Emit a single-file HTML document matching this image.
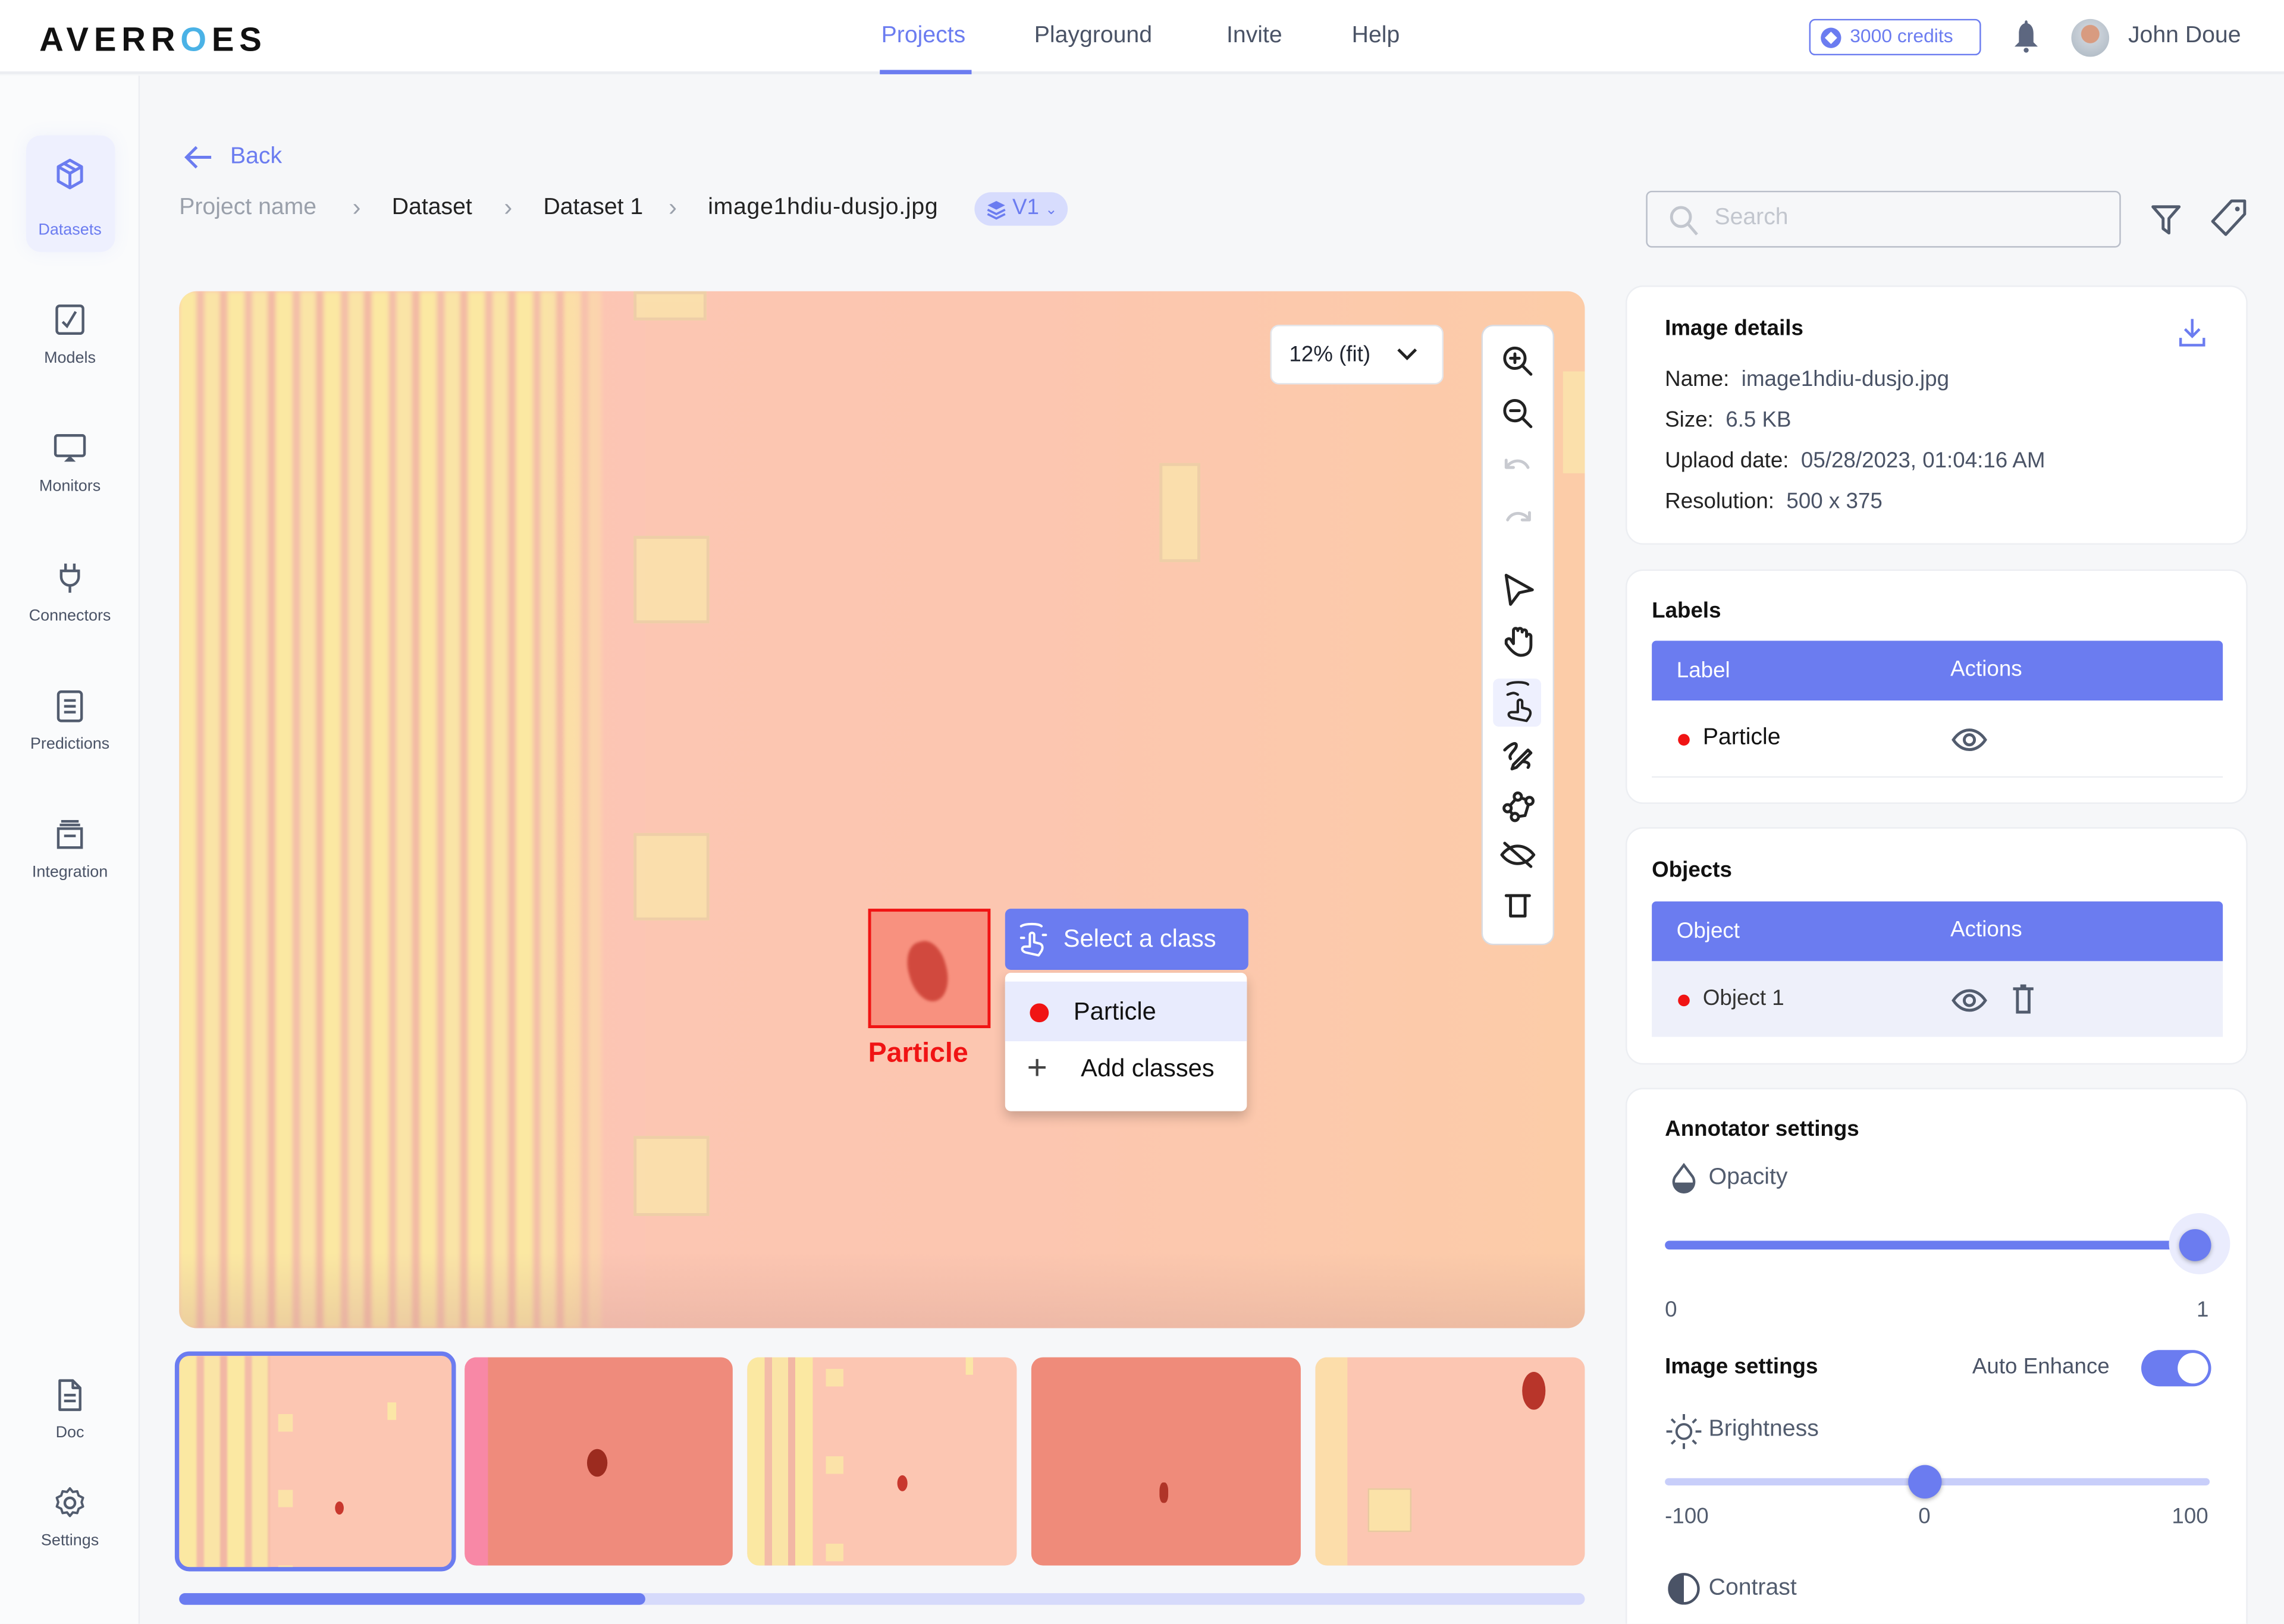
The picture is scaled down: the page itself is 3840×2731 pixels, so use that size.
<!DOCTYPE html>
<html><head><meta charset="utf-8"><style>
*{box-sizing:border-box;margin:0;padding:0}
html,body{width:3840px;height:2730px;overflow:hidden;background:#f6f7f9}
#r{position:absolute;left:0;top:0;width:1568px;height:1115px;transform:scale(2.44898);transform-origin:0 0;font-family:"Liberation Sans",sans-serif;color:#1f2430;background:#f6f7f9;overflow:hidden}
.a{position:absolute}
.nav{font-size:16px;color:#4a5366;top:16px}
.sb{position:absolute;left:0;width:96px;text-align:center;font-size:11px;color:#4a5366}
.sb svg{display:block;margin:0 auto 8px}
.card{position:absolute;left:1116px;width:427px;background:#fff;border-radius:12px;border:1px solid #eceef2}
.hd{position:absolute;left:17px;width:392px;height:41px;background:#6b7cf0;color:#fff;font-size:15px;border-radius:3px 3px 0 0}
.t{stroke:#222;fill:none;stroke-width:2;stroke-linecap:round;stroke-linejoin:round}
.thumb{position:absolute;top:932px;height:143px;border-radius:8px;overflow:hidden}
.stripes{background:repeating-linear-gradient(90deg,#fbe8a2 0 12px,#f3bca8 12px 17px,#fae4a6 17px 28px,#f2b7a4 28px 33px)}
.bc{position:absolute;top:134px;font-size:16px;color:#222;white-space:nowrap}
.ch{position:absolute;top:133px;font-size:17px;color:#9aa0ab}
.win{position:absolute;background:#fae3ac;border:2px solid #ecd0a6;opacity:.85}
</style></head><body><div id="r">
<!-- header -->
<div class="a" style="left:0;top:0;width:1568px;height:51px;background:#fff;border-bottom:2px solid #eceef2"></div>
<div class="a" style="left:27px;top:14px;font-size:23px;font-weight:bold;letter-spacing:3.6px;color:#111">AVERR<span style="color:#4ab2e6">O</span>ES</div>
<div class="a nav" style="left:605px;color:#6b7cf0">Projects</div>
<div class="a" style="left:604px;top:48px;width:63px;height:3px;background:#6b7cf0"></div>
<div class="a nav" style="left:710px">Playground</div>
<div class="a nav" style="left:842px">Invite</div>
<div class="a nav" style="left:928px">Help</div>
<div class="a" style="left:1242px;top:13px;width:118px;height:25px;border:1.5px solid #6b7cf0;border-radius:4px;color:#6b7cf0;font-size:13px;padding:3px 0 0 27px">3000 credits</div>
<div class="a" style="left:1250px;top:19px;width:14px;height:14px;border-radius:50%;background:#6b7cf0"></div>
<div class="a" style="left:1254px;top:23px;width:6px;height:6px;background:#fff;transform:rotate(45deg)"></div>
<svg class="a" style="left:1381px;top:13px" width="20" height="24" viewBox="0 0 20 24"><path d="M10 1c1 0 1 1.5 1 2 3 1 4 4 4 7v6l3 3H2l3-3v-6c0-3 1-6 4-7 0-.5 0-2 1-2z" fill="#5d6780"/><circle cx="10" cy="21.5" r="1.7" fill="#5d6780"/></svg>
<div class="a" style="left:1422px;top:13px;width:26px;height:26px;border-radius:50%;background:radial-gradient(circle at 50% 40%,#d89b80 0 30%,#c9d0d8 32%,#a9b5c0)"></div>
<div class="a" style="left:1461px;top:16px;font-size:16px;color:#4a5366">John Doue</div>
<!-- sidebar -->
<div class="a" style="left:0;top:52px;width:96px;height:1063px;background:#fafbfc;border-right:1px solid #eceef2"></div>
<div class="a" style="left:18px;top:93px;width:61px;height:80px;border-radius:10px;background:#eef0fe;box-shadow:0 0 12px rgba(107,124,240,.08)"></div>
<div class="sb" style="top:108px;color:#6b7cf0"><svg width="22" height="24" viewBox="0 0 22 24" style="margin-bottom:20px"><path d="M11 2l8 4.5v10L11 21l-8-4.5v-10zM3 6.5l8 4.5 8-4.5M11 11v10M7 4.3l8 4.5" stroke="#6b7cf0" stroke-width="2" fill="none" stroke-linejoin="round"/></svg>Datasets</div>
<div class="sb" style="top:208px"><svg width="22" height="24" viewBox="0 0 22 24"><rect x="2" y="2" width="18" height="19" rx="2" stroke="#525c6e" stroke-width="1.8" fill="none"/><path d="M6 13l3 3 6-10" stroke="#525c6e" stroke-width="1.8" fill="none"/></svg>Models</div>
<div class="sb" style="top:296px"><svg width="24" height="24" viewBox="0 0 24 24"><rect x="2" y="3" width="20" height="14" rx="1.5" stroke="#525c6e" stroke-width="1.8" fill="none"/><path d="M8 21l4-4 4 4z" fill="#525c6e"/></svg>Monitors</div>
<div class="sb" style="top:385px"><svg width="22" height="24" viewBox="0 0 22 24"><path d="M8 2v5M14 2v5M5 7h12v4a6 6 0 01-12 0zM11 17v5" stroke="#525c6e" stroke-width="1.8" fill="none"/></svg>Connectors</div>
<div class="sb" style="top:473px"><svg width="22" height="24" viewBox="0 0 22 24"><rect x="3" y="2" width="16" height="20" rx="2" stroke="#525c6e" stroke-width="1.8" fill="none"/><path d="M7 8h8M7 12h8M7 16h8" stroke="#525c6e" stroke-width="1.8"/></svg>Predictions</div>
<div class="sb" style="top:561px"><svg width="22" height="24" viewBox="0 0 22 24"><path d="M5 3h12M3 8h16v13H3zM7 13h8M4 5.5h14" stroke="#525c6e" stroke-width="1.8" fill="none"/></svg>Integration</div>
<div class="sb" style="top:946px"><svg width="22" height="24" viewBox="0 0 22 24"><path d="M4 2h9l5 5v15H4zM13 2v5h5M7 12h8M7 16h8" stroke="#525c6e" stroke-width="1.8" fill="none" stroke-linejoin="round"/></svg>Doc</div>
<div class="sb" style="top:1020px"><svg width="22" height="24" viewBox="0 0 22 24"><circle cx="11" cy="12" r="3.5" stroke="#525c6e" stroke-width="1.8" fill="none"/><path d="M11 2l2 2.5 3-.5 1 3 3 1.5-1 3 1 3-3 1.5-1 3-3-.5-2 2.5-2-2.5-3 .5-1-3-3-1.5 1-3-1-3 3-1.5 1-3 3 .5z" stroke="#525c6e" stroke-width="1.6" fill="none" stroke-linejoin="round"/></svg>Settings</div>
<!-- breadcrumb -->
<svg class="a" style="left:125px;top:98px" width="22" height="20" viewBox="0 0 22 20"><path d="M20 10H3M10 3L3 10l7 7" stroke="#6b7cf0" stroke-width="2" fill="none"/></svg>
<div class="a" style="left:158px;top:99px;font-size:16px;color:#6b7cf0">Back</div>
<div class="bc" style="left:123px;color:#9aa0ab">Project name</div>
<div class="ch" style="left:242px">›</div>
<div class="bc" style="left:269px">Dataset</div>
<div class="ch" style="left:346px">›</div>
<div class="bc" style="left:373px">Dataset 1</div>
<div class="ch" style="left:459px">›</div>
<div class="bc" style="left:486px;letter-spacing:.3px">image1hdiu-dusjo.jpg</div>
<div class="a" style="left:669px;top:132px;width:64px;height:23px;border-radius:12px;background:#d7dcfd;color:#6b7cf0;font-size:15px;padding:2px 0 0 26px">V1 <span style="font-size:10px">⌄</span></div>
<svg class="a" style="left:677px;top:137px" width="14" height="14" viewBox="0 0 14 14"><path d="M7 1l6 3-6 3-6-3z" fill="#6b7cf0"/><path d="M1 7l6 3 6-3M1 10l6 3 6-3" stroke="#6b7cf0" stroke-width="1.5" fill="none"/></svg>
<!-- search -->
<div class="a" style="left:1130px;top:131px;width:326px;height:39px;border:1.5px solid #b9bec9;border-radius:4px;background:#f6f7f9"></div>
<svg class="a" style="left:1145px;top:140px" width="22" height="22" viewBox="0 0 22 22"><circle cx="9" cy="9" r="6.5" stroke="#c2c6ce" stroke-width="2" fill="none"/><path d="M14 14l6 7" stroke="#c2c6ce" stroke-width="2"/></svg>
<div class="a" style="left:1177px;top:141px;font-size:16px;color:#c2c6ce">Search</div>
<svg class="a" style="left:1476px;top:140px" width="22" height="22" viewBox="0 0 22 22"><path d="M2 2h18l-7 8v10l-4-3v-7z" stroke="#525c6e" stroke-width="2" fill="none" stroke-linejoin="round"/></svg>
<svg class="a" style="left:1516px;top:136px" width="28" height="28" viewBox="0 0 28 28"><path d="M16 2h9v9L12 25 3 16z" stroke="#525c6e" stroke-width="2" fill="none" stroke-linejoin="round"/><circle cx="20" cy="7.5" r="1.6" fill="#525c6e"/></svg>
<!-- canvas -->
<div class="a" style="left:123px;top:200px;width:965px;height:712px;border-radius:12px;overflow:hidden;background:linear-gradient(90deg,#fcc5b4 0%,#fcc6b0 60%,#fccca8 100%)">
 <div class="a stripes" style="left:0;top:0;width:290px;height:712px;filter:blur(1.5px)"></div>
 <div class="a" style="left:250px;top:0;width:70px;height:712px;background:linear-gradient(90deg,rgba(252,197,180,0),#fcc5b4)"></div>
 <div class="win" style="left:312px;top:0;width:50px;height:20px"></div>
 <div class="win" style="left:312px;top:168px;width:52px;height:60px"></div>
 <div class="win" style="left:312px;top:372px;width:52px;height:60px"></div>
 <div class="win" style="left:312px;top:580px;width:52px;height:55px"></div>
 <div class="win" style="left:673px;top:118px;width:28px;height:68px"></div>
 <div class="win" style="left:950px;top:55px;width:15px;height:70px;border:none"></div>
 <div class="a" style="left:0;top:660px;width:965px;height:52px;background:linear-gradient(180deg,rgba(200,150,140,0),rgba(210,160,150,.35))"></div>
</div>
<!-- zoom select -->
<div class="a" style="left:872px;top:223px;width:119px;height:41px;background:#fff;border-radius:6px;border:1px solid #e3e5ea;font-size:15px;padding:11px 0 0 12px">12% (fit)</div>
<svg class="a" style="left:958px;top:237px" width="16" height="12" viewBox="0 0 16 12"><path d="M2 3l6 6 6-6" stroke="#222" stroke-width="2" fill="none"/></svg>
<!-- toolbar -->
<div class="a" style="left:1017px;top:223px;width:50px;height:426px;background:#fff;border-radius:8px;border:1.5px solid #d9dce3"></div>
<div class="a" style="left:1025px;top:466px;width:33px;height:33px;background:#eef0fe;border-radius:4px"></div>
<svg class="a" style="left:1029px;top:235px" width="26" height="410" viewBox="0 0 26 410">
 <g class="t"><circle cx="11" cy="11" r="7"/><path d="M16 16l6 6M8 11h6M11 8v6"/></g>
 <g class="t" transform="translate(0,36)"><circle cx="11" cy="11" r="7"/><path d="M16 16l6 6M8 11h6"/></g>
 <g class="t" style="stroke:#c8cad0" transform="translate(0,72)"><path d="M5 14c4-6 12-6 15 0M5 14l0-5M5 14l5 0"/></g>
 <g class="t" style="stroke:#c8cad0" transform="translate(0,108)"><path d="M21 14c-4-6-12-6-15 0M21 14l0-5M21 14l-5 0"/></g>
 <path class="t" d="M5 160l18 10-9 2-6 8z"/>
 <path class="t" d="M5 207c2 3 6 8 10 8 5 0 7-3 7-7v-6c0-2-3-2-3 0v-3c0-2-3-2-3 0v-1c0-2-3-2-3 0v0c0-2-3-2-3 0v9l-2-3c-1-1-3 0-3 1z"/>
 <path class="t" style="stroke-width:1.7" d="M6 235c3-2 12-2 14 0M6 242c3-1 4-2 7 0M9 258c-3-1-3-4 0-4l4 0v-7c0-2 3-2 3 0v4l4 1c2 1 2 3 1 5l-2 3z"/>
 <path class="t" d="M4 280c4-4 8-6 8-3s-6 6-4 9M10 290l10-10 2 2-10 10-3 1zM16 288c3 0 6 1 4 4"/>
 <g class="t"><path d="M6 320l7-8 8 3-3 10-7 1z"/><circle cx="6" cy="320" r="2.5" fill="#fff"/><circle cx="13" cy="312" r="2.5" fill="#fff"/><circle cx="21" cy="315" r="2.5" fill="#fff"/><circle cx="11" cy="326" r="2.5" fill="#fff"/></g>
 <g class="t"><path d="M2 352c6-8 16-8 22 0-6 8-16 8-22 0zM4 344l18 16"/></g>
 <g class="t"><path d="M5 380h16M8 380v14h10v-14"/></g>
</svg>
<!-- bbox + menu -->
<div class="a" style="left:596px;top:624px;width:84px;height:82px;border:2px solid #f01414;background:#f8917f"></div>
<div class="a" style="left:624px;top:646px;width:26px;height:42px;border-radius:45% 45% 50% 50%;background:#c8382e;transform:rotate(-15deg);opacity:.8;filter:blur(1px)"></div>
<div class="a" style="left:596px;top:713px;font-size:19px;color:#f01414;font-weight:bold">Particle</div>
<div class="a" style="left:690px;top:624px;width:167px;height:42px;background:#6b7cf0;border-radius:4px;color:#fff;font-size:17px;padding:11px 0 0 40px">Select a class</div>
<svg class="a" style="left:698px;top:633px" width="22" height="24" viewBox="0 0 22 24"><path class="t" style="stroke:#fff;stroke-width:1.6" d="M3 3c3-2 12-2 14 0M6 21c-3-1-3-4 0-4l3 0v-8c0-2 3-2 3 0v5l4 1c2 1 2 3 1 5l-2 3zM3 11l2 0M18 9l2 0"/></svg>
<div class="a" style="left:690px;top:668px;width:166px;height:95px;background:#fff;border-radius:4px;box-shadow:0 4px 8px rgba(0,0,0,.2)"></div>
<div class="a" style="left:690px;top:674px;width:166px;height:41px;background:#e8ebfd"></div>
<div class="a" style="left:707px;top:689px;width:13px;height:13px;border-radius:50%;background:#f01414"></div>
<div class="a" style="left:737px;top:685px;font-size:17px;color:#111">Particle</div>
<div class="a" style="left:705px;top:720px;font-size:24px;color:#444;font-weight:300">+</div>
<div class="a" style="left:742px;top:724px;font-size:17px;color:#111">Add classes</div>
<!-- thumbnails -->
<div class="thumb" style="left:120px;top:928px;width:193px;height:151px;border:3px solid #6b7cf0;border-radius:10px;background:#fcc6b2"><div class="a stripes" style="left:0;top:0;width:62px;height:151px;filter:blur(.6px)"></div><div class="a" style="left:68px;top:0;width:10px;height:150px;background:repeating-linear-gradient(180deg,#fcc6b2 0 40px,#fbe2a8 40px 52px)"></div><div class="a" style="left:143px;top:32px;width:6px;height:12px;background:#fbe6a6"></div><div class="a" style="left:107px;top:100px;width:6px;height:9px;background:#c8382e;border-radius:50%"></div></div>
<div class="thumb" style="left:319px;width:184px;background:#ef8b7c"><div class="a" style="left:0;top:0;width:16px;height:143px;background:#f888a6"></div><div class="a" style="left:84px;top:63px;width:14px;height:19px;background:#9c2b1f;border-radius:50%"></div></div>
<div class="thumb" style="left:513px;width:185px;background:#fcc6b2"><div class="a stripes" style="left:0;top:0;width:45px;height:143px"></div><div class="a" style="left:54px;top:0;width:12px;height:143px;background:repeating-linear-gradient(180deg,#fcc6b2 0 8px,#fbe2a8 8px 20px,#fcc6b2 20px 60px)"></div><div class="a" style="left:150px;top:0;width:5px;height:12px;background:#fbe6a6"></div><div class="a" style="left:103px;top:81px;width:7px;height:11px;background:#c8382e;border-radius:50%"></div></div>
<div class="thumb" style="left:708px;width:185px;background:#ef8b7a"><div class="a" style="left:88px;top:86px;width:6px;height:14px;background:#b03528;border-radius:40%"></div></div>
<div class="thumb" style="left:903px;width:185px;background:#fcc6b2"><div class="a" style="left:0;top:0;width:22px;height:143px;background:#fbe2a8;opacity:.8"></div><div class="a" style="left:36px;top:90px;width:30px;height:30px;background:#fbe2a8;border:1.5px solid #e8c9a0"></div><div class="a" style="left:142px;top:10px;width:16px;height:26px;background:#b8352a;border-radius:50%"></div></div>
<div class="a" style="left:123px;top:1094px;width:965px;height:8px;border-radius:4px;background:#d6dafb"></div>
<div class="a" style="left:123px;top:1094px;width:320px;height:8px;border-radius:4px;background:#6b7cf0"></div>
<!-- right cards -->
<div class="card" style="top:196px;height:178px">
 <div class="a" style="left:26px;top:20px;font-size:15px;font-weight:bold;color:#111">Image details</div>
 <svg class="a" style="left:378px;top:20px" width="20" height="22" viewBox="0 0 20 22"><path d="M10 2v12M5 9l5 5 5-5M2 15v5h16v-5" stroke="#6b7cf0" stroke-width="1.8" fill="none"/></svg>
 <div class="a" style="left:26px;top:50px;font-size:15px;line-height:28px;color:#222">Name:&nbsp; <span style="color:#4a5366">image1hdiu-dusjo.jpg</span><br>Size:&nbsp; <span style="color:#4a5366">6.5 KB</span><br>Uplaod date:&nbsp; <span style="color:#4a5366">05/28/2023, 01:04:16 AM</span><br>Resolution:&nbsp; <span style="color:#4a5366">500 x 375</span></div>
</div>
<div class="card" style="top:391px;height:161px">
 <div class="a" style="left:17px;top:19px;font-size:15px;font-weight:bold;color:#111">Labels</div>
 <div class="hd" style="top:48px"><span class="a" style="left:17px;top:12px">Label</span><span class="a" style="left:205px;top:11px">Actions</span></div>
 <div class="a" style="left:17px;top:89px;width:392px;height:53px;border-bottom:1px solid #eceef2"></div>
 <div class="a" style="left:35px;top:112px;width:8px;height:8px;border-radius:50%;background:#f01414"></div>
 <div class="a" style="left:52px;top:106px;font-size:16px;color:#111">Particle</div>
 <svg class="a" style="left:222px;top:107px" width="26" height="18" viewBox="0 0 26 18"><path d="M2 9c6-9 16-9 22 0-6 9-16 9-22 0z" stroke="#525c6e" stroke-width="2" fill="none"/><circle cx="13" cy="9" r="3.5" stroke="#525c6e" stroke-width="2" fill="none"/></svg>
</div>
<div class="card" style="top:568px;height:163px">
 <div class="a" style="left:17px;top:20px;font-size:15px;font-weight:bold;color:#111">Objects</div>
 <div class="hd" style="top:50px"><span class="a" style="left:17px;top:12px">Object</span><span class="a" style="left:205px;top:11px">Actions</span></div>
 <div class="a" style="left:17px;top:91px;width:392px;height:52px;background:#eef0fa"></div>
 <div class="a" style="left:35px;top:114px;width:8px;height:8px;border-radius:50%;background:#f01414"></div>
 <div class="a" style="left:52px;top:108px;font-size:15px;color:#333">Object 1</div>
 <svg class="a" style="left:222px;top:109px" width="26" height="18" viewBox="0 0 26 18"><path d="M2 9c6-9 16-9 22 0-6 9-16 9-22 0z" stroke="#525c6e" stroke-width="2" fill="none"/><circle cx="13" cy="9" r="3.5" stroke="#525c6e" stroke-width="2" fill="none"/></svg>
 <svg class="a" style="left:263px;top:106px" width="18" height="22" viewBox="0 0 18 22"><path d="M2 4h14M5 4v16h8V4M7 2h4" stroke="#525c6e" stroke-width="2" fill="none"/></svg>
</div>
<div class="card" style="top:747px;height:380px">
 <div class="a" style="left:26px;top:19px;font-size:15px;font-weight:bold;color:#111">Annotator settings</div>
 <svg class="a" style="left:28px;top:50px" width="22" height="24" viewBox="0 0 22 24"><path d="M11 2l6 8a7 7 0 11-12 0z" stroke="#525c6e" stroke-width="1.8" fill="none"/><path d="M4 14h14a7 7 0 01-14 0z" fill="#525c6e"/></svg>
 <div class="a" style="left:56px;top:52px;font-size:16px;color:#525c6e">Opacity</div>
 <div class="a" style="left:26px;top:104px;width:364px;height:6px;border-radius:3px;background:#6b7cf0"></div>
 <div class="a" style="left:372px;top:85px;width:42px;height:42px;border-radius:50%;background:#eaecfd"></div>
 <div class="a" style="left:379px;top:96px;width:22px;height:22px;border-radius:50%;background:#6b7cf0;box-shadow:0 1px 3px rgba(0,0,0,.3)"></div>
 <div class="a" style="left:26px;top:143px;font-size:15px;color:#525c6e">0</div>
 <div class="a" style="left:391px;top:143px;font-size:15px;color:#525c6e">1</div>
 <div class="a" style="left:26px;top:182px;font-size:15px;font-weight:bold;color:#111">Image settings</div>
 <div class="a" style="left:237px;top:182px;font-size:15px;color:#4a5366">Auto Enhance</div>
 <div class="a" style="left:353px;top:179px;width:48px;height:25px;border-radius:13px;background:#6b7cf0"></div>
 <div class="a" style="left:378px;top:181px;width:21px;height:21px;border-radius:50%;background:#fff"></div>
 <svg class="a" style="left:26px;top:222px" width="26" height="26" viewBox="0 0 26 26"><circle cx="13" cy="13" r="5" stroke="#525c6e" stroke-width="1.6" fill="none"/><path d="M13 1v4M13 21v4M1 13h4M21 13h4M4.5 4.5l2.5 2.5M19 19l2.5 2.5M4.5 21.5L7 19M19 7l2.5-2.5" stroke="#525c6e" stroke-width="1.6"/></svg>
 <div class="a" style="left:56px;top:225px;font-size:16px;color:#525c6e">Brightness</div>
 <div class="a" style="left:26px;top:267px;width:374px;height:5px;border-radius:3px;background:#c8cefa"></div>
 <div class="a" style="left:193px;top:258px;width:23px;height:23px;border-radius:50%;background:#6b7cf0;box-shadow:0 1px 3px rgba(0,0,0,.3)"></div>
 <div class="a" style="left:26px;top:285px;font-size:15px;color:#525c6e">-100</div>
 <div class="a" style="left:200px;top:285px;font-size:15px;color:#525c6e">0</div>
 <div class="a" style="left:374px;top:285px;font-size:15px;color:#525c6e">100</div>
 <svg class="a" style="left:28px;top:332px" width="24" height="24" viewBox="0 0 24 24"><circle cx="11" cy="11" r="10" stroke="#4a5366" stroke-width="1.8" fill="none"/><path d="M11 1a10 10 0 000 20z" fill="#4a5366"/></svg>
 <div class="a" style="left:56px;top:334px;font-size:16px;color:#525c6e">Contrast</div>
</div>
</div></body></html>
